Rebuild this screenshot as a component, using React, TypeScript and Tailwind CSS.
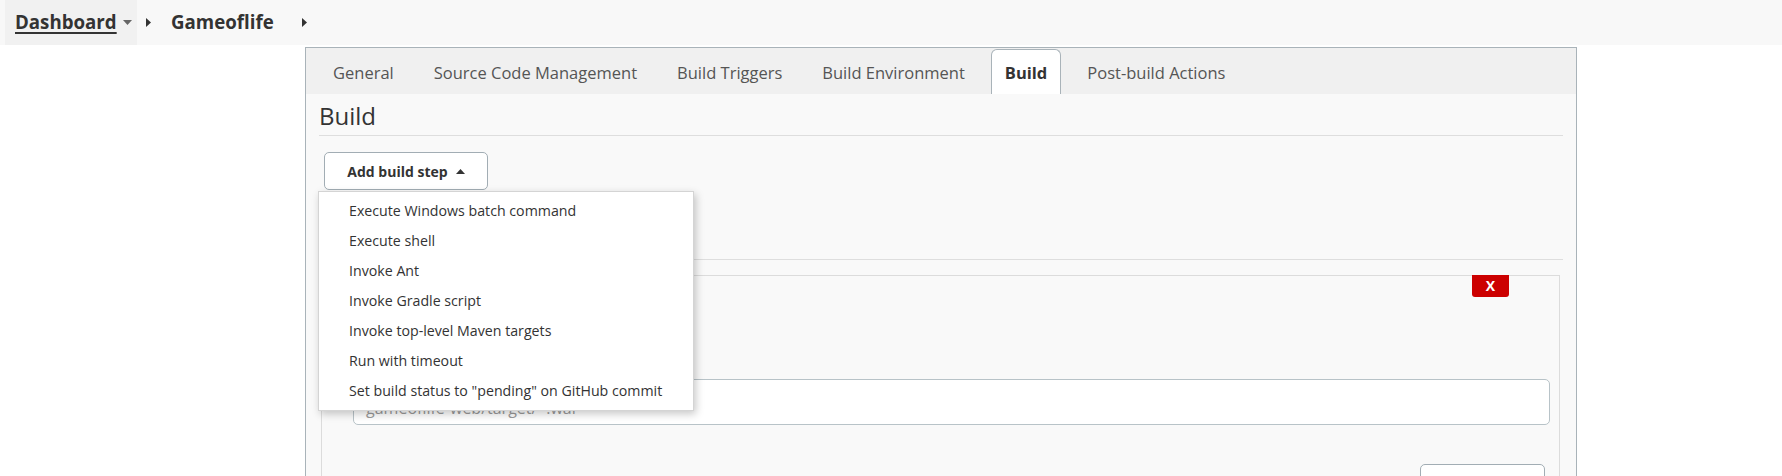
import React from "react";

const CaretDown = ({ className = "" }: { className?: string }) => (
  <svg width="9" height="5" viewBox="0 0 9 5" className={className}>
    <path d="M0 0 L9 0 L4.5 5 Z" fill="currentColor" />
  </svg>
);

const CaretRight = ({ className = "" }: { className?: string }) => (
  <svg width="5" height="9" viewBox="0 0 5 9" className={className}>
    <path d="M0 0 L5 4.5 L0 9 Z" fill="currentColor" />
  </svg>
);

const CaretUp = ({ className = "" }: { className?: string }) => (
  <svg width="9" height="5" viewBox="0 0 9 5" className={className}>
    <path d="M0 5 L9 5 L4.5 0 Z" fill="currentColor" />
  </svg>
);

const tabs = [
  "General",
  "Source Code Management",
  "Build Triggers",
  "Build Environment",
  "Build",
  "Post-build Actions",
];

const menuItems = [
  "Execute Windows batch command",
  "Execute shell",
  "Invoke Ant",
  "Invoke Gradle script",
  "Invoke top-level Maven targets",
  "Run with timeout",
  'Set build status to "pending" on GitHub commit',
];

export default function App() {
  return (
    <div
      className="w-[1782px] h-[476px] overflow-hidden bg-white text-[#333]"
      style={{ fontFamily: '"Open Sans", "Noto Sans", sans-serif' }}
    >
      {/* Breadcrumb bar */}
      <div className="h-[45px] bg-[#f8f8f8] flex items-stretch">
        <div className="ml-[5px] w-[132px] bg-[#f1f1f1] flex items-center pl-[10px]">
          <span className="text-[18.7px] font-bold underline underline-offset-[3px] decoration-[1.5px] leading-none">
            Dashboard
          </span>
          <CaretDown className="ml-[6px] text-[#666]" />
        </div>
        <div className="flex items-center">
          <CaretRight className="ml-[9px] text-[#333]" />
          <span className="ml-[20px] text-[18.7px] font-bold leading-none">Gameoflife</span>
          <CaretRight className="ml-[28px] text-[#333]" />
        </div>
      </div>

      {/* Panel */}
      <div className="mt-[2px] ml-[305px] w-[1272px] h-[429px] border border-b-0 border-[#a9b3b9] bg-[#f9f9f9]">
        {/* Tab bar */}
        <div className="h-[46px] bg-[#f0f0f0] flex items-end pl-[13px] gap-[12px]">
          {tabs.map((t) =>
            t === "Build" ? (
              <div
                key={t}
                className="h-[45px] px-[13px] pt-[3px] flex items-center bg-white border border-b-0 border-[#a9b3b9] rounded-t-[6px] text-[16.5px] font-bold text-[#333]"
              >
                {t}
              </div>
            ) : (
              <div
                key={t}
                className="h-[45px] px-[14px] pt-[3px] flex items-center text-[16.5px] text-[#555]"
              >
                {t}
              </div>
            )
          )}
        </div>

        {/* Content */}
        <div className="px-[13px]">
          <div className="pt-[6px] pb-[3px] leading-[32px] text-[24px] border-b border-[#dedede] text-[#333]">
            Build
          </div>

          <div className="relative ml-[5px] mt-[16px] w-[164px]">
            <button className="w-[164px] h-[38px] bg-white border-[1.5px] border-[#a2adb4] rounded-[5px] flex items-center justify-center gap-[8px] text-[14px] font-bold text-[#333]">
              <span>Add build step</span>
              <CaretUp className="text-[#333]" />
            </button>

            <div className="absolute left-[-6px] top-[39px] w-[376px] bg-white border border-[#d4d4d4] shadow-[2px_3px_8px_rgba(0,0,0,0.22)] py-[4px] z-10">
              {menuItems.map((m) => (
                <div
                  key={m}
                  className="h-[30px] pl-[30px] flex items-center text-[14.2px] text-[#333] whitespace-nowrap"
                >
                  {m}
                </div>
              ))}
            </div>
          </div>

          <div className="mt-[69px] border-b border-[#dedede]" />

          {/* Build step card */}
          <div className="relative mt-[15px] ml-[2px] mr-[3px] h-[300px] border border-[#dcdcdc] bg-[#f9f9f9]">
            <div className="absolute top-[-1px] right-[50px] w-[37px] h-[22px] bg-[#cc0000] rounded-b-[3px] flex items-center justify-center text-white text-[14px] font-bold leading-none">
              X
            </div>
            <div className="mt-[103px] ml-[31px] mr-[9px] h-[46px] bg-white border-[1.5px] border-[#b8c3c8] rounded-[5px] flex items-center pl-[12px] pt-[11px] text-[16px] text-[#9a9a9a]">
              gameoflife-web/target/*.war
            </div>
            <div className="mt-[39px] ml-auto mr-[14px] w-[125px] h-[30px] bg-white border-[1.5px] border-[#a2adb4] rounded-[5px]" />
          </div>
        </div>
      </div>
    </div>
  );
}
